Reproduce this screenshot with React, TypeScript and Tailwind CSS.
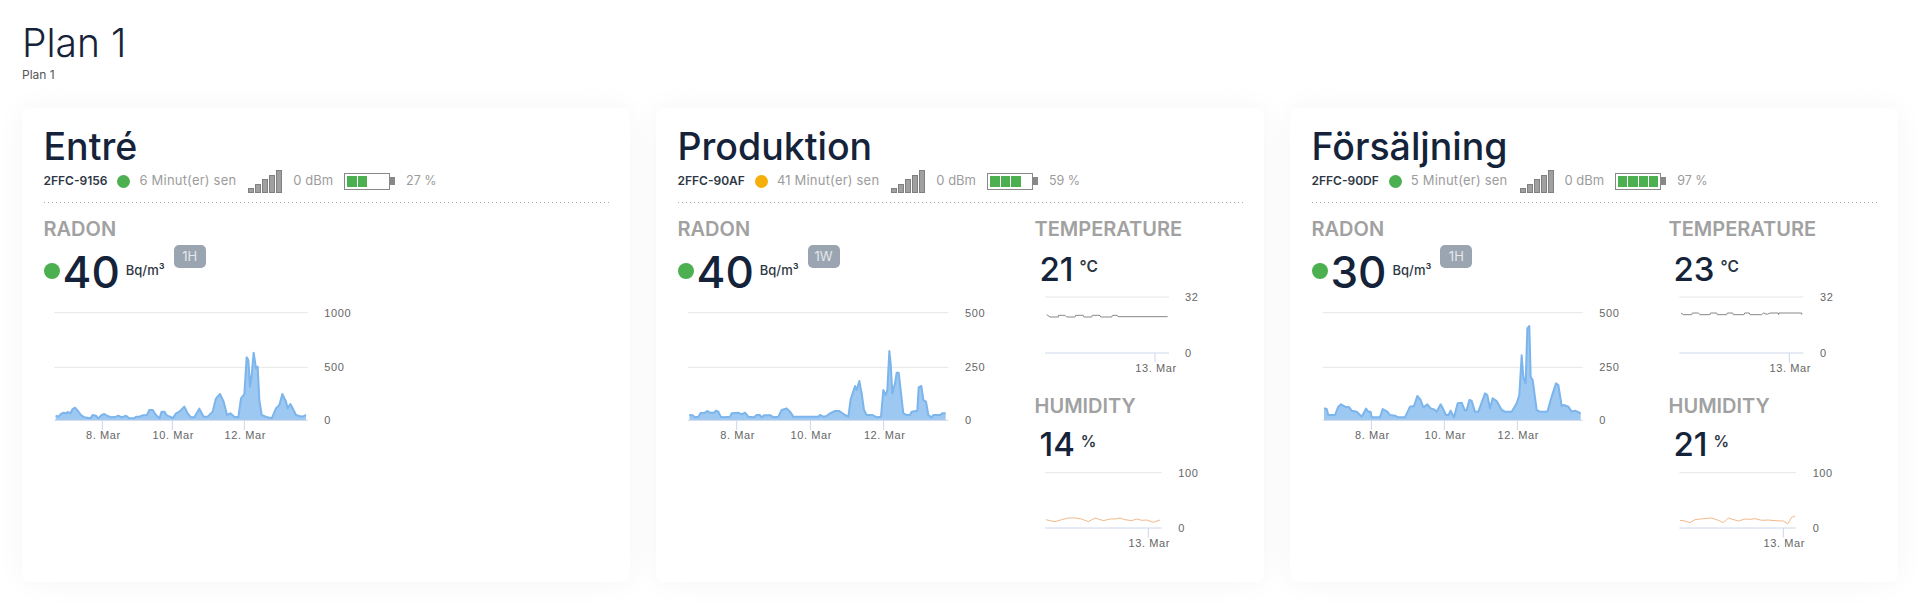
import React from 'react';

type Pt = number[];

const toPath = (pts: Pt[]) => pts.map((p, i) => `${i === 0 ? 'M' : 'L'}${p[0]} ${p[1]}`).join(' ');

const AxisText: React.FC<{ x: number; y: number; anchor?: 'middle' | 'start'; children: React.ReactNode }> = ({ x, y, anchor = 'start', children }) => (
  <text x={x} y={y} textAnchor={anchor} fontSize={33} letterSpacing={1.8} fill="#666666" fontFamily="'Liberation Sans', sans-serif">
    {children}
  </text>
);

// all chart coords are in 1/3 px units
const RadonChart: React.FC<{
  ox: number;
  left: number;
  right: number;
  label: number;
  max: string;
  mid: string;
  ticks: number[];
  data: Pt[];
}> = ({ ox, left, right, label, max, mid, ticks, data }) => {
  const first = data[0][0];
  const last = data[data.length - 1][0];
  const names = ['8. Mar', '10. Mar', '12. Mar'];
  return (
    <svg className="block mt-[7px]" width={320} height={150} viewBox={`${ox} 0 960 450`}>
      <line x1={left} x2={right} y1={38} y2={38} stroke="#e6e6e6" strokeWidth={3} />
      <line x1={left} x2={right} y1={202} y2={202} stroke="#e6e6e6" strokeWidth={3} />
      <path d={`${toPath(data)} L${last} 360 L${first} 360 Z`} fill="#7cb5ec" fillOpacity={0.75} />
      <path d={toPath(data)} fill="none" stroke="#7cb5ec" strokeWidth={6} strokeLinejoin="round" />
      <line x1={left} x2={right} y1={361} y2={361} stroke="#ccd6eb" strokeWidth={3} />
      {ticks.map((t, i) => (
        <g key={t}>
          <line x1={t} x2={t} y1={361} y2={390} stroke="#ccd6eb" strokeWidth={3} />
          <AxisText x={t + 3} y={418} anchor="middle">{names[i]}</AxisText>
        </g>
      ))}
      <AxisText x={label} y={50}>{max}</AxisText>
      <AxisText x={label} y={213}>{mid}</AxisText>
      <AxisText x={label} y={371}>0</AxisText>
    </svg>
  );
};

const SmallChart: React.FC<{
  ox: number;
  oy: number;
  left: number;
  right: number;
  top: number;
  bottom: number;
  label: number;
  max: string;
  tick: number;
  color: string;
  data: Pt[];
}> = ({ ox, oy, left, right, top, bottom, label, max, tick, color, data }) => (
  <svg className="block" width={220} height={90} viewBox={`${ox} ${oy} 660 270`}>
    <line x1={left} x2={right} y1={top} y2={top} stroke="#e6e6e6" strokeWidth={3} />
    <path d={toPath(data)} fill="none" stroke={color} strokeWidth={3} />
    <line x1={left} x2={right} y1={bottom} y2={bottom} stroke="#ccd6eb" strokeWidth={3} />
    <line x1={tick} x2={tick} y1={bottom} y2={bottom + 28} stroke="#ccd6eb" strokeWidth={3} />
    <AxisText x={label} y={top + 12}>{max}</AxisText>
    <AxisText x={label} y={bottom + 11}>0</AxisText>
    <AxisText x={tick + 3} y={bottom + 57} anchor="middle">13. Mar</AxisText>
  </svg>
);

const Signal = () => (
  <div className="flex items-end gap-px h-[23px]">
    <span className="w-[6px] h-[5px] bg-[#a0a0a0] border border-[#808080]" />
    <span className="w-[6px] h-[9px] bg-[#a0a0a0] border border-[#808080]" />
    <span className="w-[6px] h-[14px] bg-[#a0a0a0] border border-[#808080]" />
    <span className="w-[6px] h-[18px] bg-[#a0a0a0] border border-[#808080]" />
    <span className="w-[6px] h-[23px] bg-[#a0a0a0] border border-[#808080]" />
  </div>
);

const Battery: React.FC<{ cells: number }> = ({ cells }) => (
  <div className="flex items-center">
    <div className="w-[46px] h-[17px] border border-[#888888] flex gap-px items-center px-[2px]">
      {Array.from({ length: cells }).map((_, i) => (
        <span key={i} className="w-[9.5px] h-[11px] bg-[#4caf50]" />
      ))}
    </div>
    <span className="w-[5px] h-[8px] bg-[#888888]" />
  </div>
);

type CardProps = {
  name: string;
  id: string;
  dot: string;
  ago: string;
  cells: number;
  pct: string;
  radon: string;
  badge: string;
  chart: React.ReactNode;
  side?: React.ReactNode;
};

const Card: React.FC<CardProps> = ({ name, id, dot, ago, cells, pct, radon, badge, chart, side }) => (
  <div className="h-[474px] rounded-lg bg-white px-[21.5px] pt-[19px] shadow-[0_0_30px_rgba(0,0,0,0.045)]">
    <h2 className="text-[37.5px] leading-[40px] font-medium text-[#14233a]">{name}</h2>
    <div className="mt-[2px] h-[24px] flex items-center text-[13px]">
      <span className="text-[12px] font-semibold text-[#2e3744]">{id}</span>
      <span className={`ml-[10px] w-[13px] h-[13px] rounded-full ${dot}`} />
      <span className="ml-[9px] text-[#9c9c9c] tracking-[0.2px]">{ago}</span>
      <span className="ml-[12px]"><Signal /></span>
      <span className="ml-[11px] text-[#9c9c9c]">0 dBm</span>
      <span className="ml-[11px]"><Battery cells={cells} /></span>
      <span className="ml-[11px] text-[12.5px] text-[#9c9c9c]">{pct}</span>
    </div>
    <div className="mt-[9px] h-px bg-[repeating-linear-gradient(90deg,#aaaaaa_0,#aaaaaa_1px,transparent_1px,transparent_4px)]" />
    <div className="flex">
      <div className="w-[357px] shrink-0">
        <h3 className="mt-[14px] text-[20px] leading-[24px] font-semibold text-[#a1a1a1]">RADON</h3>
        <div className="mt-[8px] h-[44px] flex items-center">
          <span className="w-[16px] h-[16px] rounded-full bg-[#4caf50]" />
          <span className="ml-[3px] mt-[1px] text-[44px] leading-[44px] font-medium text-[#14233a]">{radon}</span>
          <span className="ml-[6px] text-[13px] font-medium text-[#2e3744]">Bq/m³</span>
          <span className="ml-[9px] -mt-[7px] -translate-y-[11px] w-[32px] h-[23px] rounded-[5px] bg-[#9aa5b1] text-[#e4e8ec] text-[13px] flex items-center justify-center">{badge}</span>
        </div>
        {chart}
      </div>
      {side}
    </div>
  </div>
);

const Reading: React.FC<{ value: string; unit: string }> = ({ value, unit }) => (
  <div className="pl-[5px] flex items-center h-[36px]">
    <span className="text-[33px] leading-[36px] font-medium text-[#14233a]">{value}</span>
    <span className="ml-[6px] -mt-[4px] text-[15.5px] font-semibold text-[#2e3744]">{unit}</span>
  </div>
);

const Side: React.FC<{ temp: string; hum: string; tempChart: React.ReactNode; humChart: React.ReactNode }> = ({ temp, hum, tempChart, humChart }) => (
  <div className="flex-1">
    <h3 className="mt-[14px] text-[20px] leading-[24px] font-semibold text-[#a1a1a1]">TEMPERATURE</h3>
    <div className="mt-[10px]"><Reading value={temp} unit="°C" /></div>
    <div className="mt-[5px]">{tempChart}</div>
    <h3 className="mt-[12px] text-[20px] leading-[24px] font-semibold text-[#a1a1a1]">HUMIDITY</h3>
    <div className="mt-[8px]"><Reading value={hum} unit="%" /></div>
    <div className="mt-[6px]">{humChart}</div>
  </div>
);

const radon1: Pt[] = [[44,347],[52,350],[60,342],[68,338],[76,340],[80,336],[88,340],[95,327],[102,323],[110,332],[120,345],[130,352],[148,355],[155,345],[165,347],[172,355],[182,345],[190,342],[200,348],[212,352],[225,350],[232,347],[242,352],[255,347],[265,355],[280,355],[285,350],[295,350],[305,346],[318,345],[325,330],[335,330],[345,345],[355,355],[362,335],[370,335],[378,347],[388,350],[395,355],[405,340],[415,335],[430,320],[440,340],[450,352],[460,352],[475,326],[488,350],[500,350],[515,335],[525,295],[537,282],[548,305],[558,345],[568,340],[580,350],[592,352],[600,295],[610,282],[617,172],[622,180],[627,260],[632,225],[638,158],[645,205],[650,200],[655,300],[662,345],[680,352],[692,355],[705,325],[715,315],[724,282],[735,305],[740,325],[748,312],[755,325],[765,345],[775,348],[785,350],[795,345]];
const radon2: Pt[] = [[28,345],[38,346],[45,352],[55,350],[62,339],[75,338],[82,333],[90,338],[102,338],[108,332],[115,335],[122,350],[130,352],[150,350],[155,340],[175,338],[185,343],[195,338],[205,350],[222,352],[230,345],[240,345],[245,352],[252,346],[272,346],[280,352],[295,350],[305,330],[320,325],[330,335],[340,350],[415,350],[420,345],[430,350],[440,348],[450,340],[465,333],[478,333],[495,345],[505,350],[512,298],[525,258],[530,270],[538,243],[545,280],[552,330],[560,345],[578,345],[590,352],[603,350],[610,270],[617,285],[622,270],[628,153],[632,190],[637,280],[645,250],[650,218],[656,218],[662,270],[670,340],[680,345],[690,345],[695,335],[712,332],[716,262],[724,258],[730,300],[738,305],[745,345],[755,352],[760,345],[780,345],[787,340],[797,340]];
const radon3: Pt[] = [[42,325],[50,327],[55,345],[75,345],[85,320],[93,313],[105,320],[118,322],[125,332],[140,335],[150,345],[155,350],[168,326],[175,335],[182,335],[185,352],[210,352],[218,327],[232,335],[240,345],[255,347],[265,352],[285,352],[300,320],[312,318],[322,288],[332,300],[340,322],[352,313],[362,325],[372,328],[380,335],[392,313],[400,328],[408,345],[415,345],[422,332],[432,352],[443,310],[455,308],[465,332],[470,330],[478,300],[485,302],[495,335],[505,335],[525,280],[532,285],[540,325],[548,295],[560,303],[575,330],[585,335],[605,335],[620,310],[628,285],[635,166],[640,230],[647,250],[652,85],[658,78],[662,230],[668,240],[680,330],[690,335],[712,335],[725,290],[738,250],[745,255],[755,318],[762,315],[775,320],[785,335],[795,332],[802,335],[812,340]];

const temp2: Pt[] = [[140,313],[150,320],[175,320],[175,315],[195,315],[200,320],[225,320],[227,315],[250,315],[252,320],[275,320],[277,315],[300,315],[302,320],[335,320],[337,315],[352,315],[354,319],[503,319]];
const temp3: Pt[] = [[93,308],[100,313],[125,313],[127,308],[145,308],[150,313],[180,313],[182,308],[200,308],[202,313],[230,313],[232,308],[248,308],[250,313],[282,313],[284,308],[298,308],[300,313],[335,313],[340,308],[352,312],[360,308],[385,308],[386,313],[387,308],[455,308],[455,313]];
const hum2: Pt[] = [[138,405],[150,408],[165,411],[185,405],[205,400],[225,400],[245,403],[265,411],[285,400],[310,408],[330,403],[345,403],[360,400],[375,405],[395,408],[410,403],[425,407],[440,406],[460,413],[480,406]];
const hum3: Pt[] = [[90,407],[105,409],[120,414],[135,405],[160,402],[185,400],[205,407],[220,414],[235,400],[265,409],[285,403],[300,404],[315,402],[335,407],[355,406],[375,408],[400,409],[413,418],[425,398],[435,394]];

export default function App() {
  return (
    <div className="h-[603px] overflow-hidden bg-white px-[22px] pt-[23px] font-['Inter',sans-serif]">
      <h1 className="text-[39px] leading-[40px] font-light text-[#14233a]">Plan 1</h1>
      <p className="mt-[4px] text-[12px] leading-[16px] text-[#555555]">Plan 1</p>
      <div className="mt-[25px] grid grid-cols-3 gap-[26px]">
        <Card
          name="Entré"
          id="2FFC-9156"
          dot="bg-[#4caf50]"
          ago="6 Minut(er) sen"
          cells={2}
          pct="27 %"
          radon="40"
          badge="1H"
          chart={<RadonChart ox={9} left={40} right={800} label={850} max="1000" mid="500" ticks={[184, 394, 610]} data={radon1} />}
        />
        <Card
          name="Produktion"
          id="2FFC-90AF"
          dot="bg-[#f5ae0a]"
          ago="41 Minut(er) sen"
          cells={3}
          pct="59 %"
          radon="40"
          badge="1W"
          chart={<RadonChart ox={-6} left={24} right={805} label={855} max="500" mid="250" ticks={[170, 391, 611]} data={radon2} />}
          side={
            <Side
              temp="21"
              hum="14"
              tempChart={<SmallChart ox={105} oy={245} left={135} right={507} top={260} bottom={428} label={555} max="32" tick={465} color="#888888" data={temp2} />}
              humChart={<SmallChart ox={105} oy={250} left={135} right={485} top={264} bottom={430} label={535} max="100" tick={445} color="#f2b98a" data={hum2} />}
            />
          }
        />
        <Card
          name="Försäljning"
          id="2FFC-90DF"
          dot="bg-[#4caf50]"
          ago="5 Minut(er) sen"
          cells={4}
          pct="97 %"
          radon="30"
          badge="1H"
          chart={<RadonChart ox={6} left={38} right={818} label={868} max="500" mid="250" ticks={[184, 403, 622]} data={radon3} />}
          side={
            <Side
              temp="23"
              hum="21"
              tempChart={<SmallChart ox={57} oy={245} left={88} right={460} top={260} bottom={428} label={510} max="32" tick={418} color="#888888" data={temp3} />}
              humChart={<SmallChart ox={57} oy={250} left={88} right={438} top={264} bottom={430} label={488} max="100" tick={400} color="#f2b98a" data={hum3} />}
            />
          }
        />
      </div>
    </div>
  );
}
